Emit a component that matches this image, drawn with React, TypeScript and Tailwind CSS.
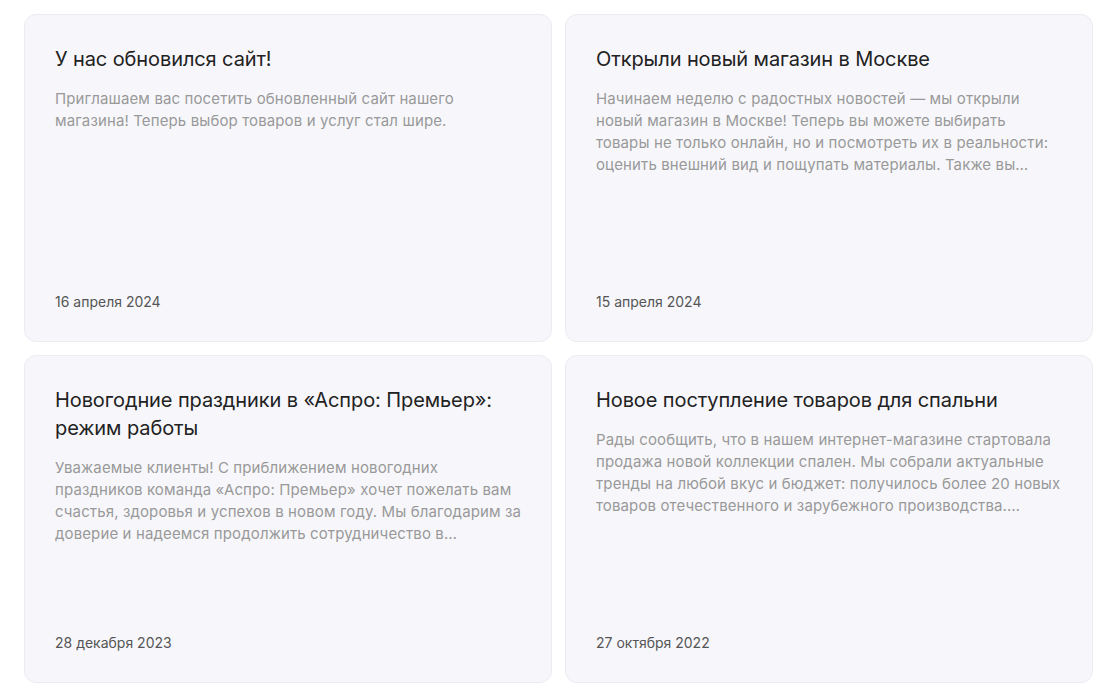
import React from "react";

type News = { title: string[]; body: string[]; date: string };

const items: News[] = [
  {
    title: ["У нас обновился сайт!"],
    body: [
      "Приглашаем вас посетить обновленный сайт нашего",
      "магазина! Теперь выбор товаров и услуг стал шире.",
    ],
    date: "16 апреля 2024",
  },
  {
    title: ["Открыли новый магазин в Москве"],
    body: [
      "Начинаем неделю с радостных новостей — мы открыли",
      "новый магазин в Москве! Теперь вы можете выбирать",
      "товары не только онлайн, но и посмотреть их в реальности:",
      "оценить внешний вид и пощупать материалы. Также вы…",
    ],
    date: "15 апреля 2024",
  },
  {
    title: ["Новогодние праздники в «Аспро: Премьер»:", "режим работы"],
    body: [
      "Уважаемые клиенты! С приближением новогодних",
      "праздников команда «Аспро: Премьер» хочет пожелать вам",
      "счастья, здоровья и успехов в новом году. Мы благодарим за",
      "доверие и надеемся продолжить сотрудничество в…",
    ],
    date: "28 декабря 2023",
  },
  {
    title: ["Новое поступление товаров для спальни"],
    body: [
      "Рады сообщить, что в нашем интернет-магазине стартовала",
      "продажа новой коллекции спален. Мы собрали актуальные",
      "тренды на любой вкус и бюджет: получилось более 20 новых",
      "товаров отечественного и зарубежного производства.…",
    ],
    date: "27 октября 2022",
  },
];

function Card({ n }: { n: News }) {
  return (
    <div className="flex h-[328px] flex-col rounded-[12px] border border-[#ebebf1] bg-[#f7f7fb] px-[30px] pt-[30px] pb-[29px]">
      <div className="text-[20px] leading-[28px] tracking-[-0.1px] text-[#222222]">
        {n.title.map((t, i) => (
          <div key={i} className="whitespace-nowrap">
            {t}
          </div>
        ))}
      </div>
      <div className="mt-[15px] text-[15px] leading-[22px] tracking-[0.12px] text-[#999999]">
        {n.body.map((t, i) => (
          <div key={i} className="whitespace-nowrap">
            {t}
          </div>
        ))}
      </div>
      <div className="mt-auto text-[14px] leading-[20px] text-[#555555]">{n.date}</div>
    </div>
  );
}

export default function App() {
  return (
    <div
      className="min-h-[693px] bg-white pl-[24px] pt-[14px]"
      style={{ fontFamily: "Inter, 'Noto Sans', sans-serif" }}
    >
      <div className="grid w-[1069px] grid-cols-2 gap-[13px]">
        {items.map((n, i) => (
          <Card key={i} n={n} />
        ))}
      </div>
    </div>
  );
}
